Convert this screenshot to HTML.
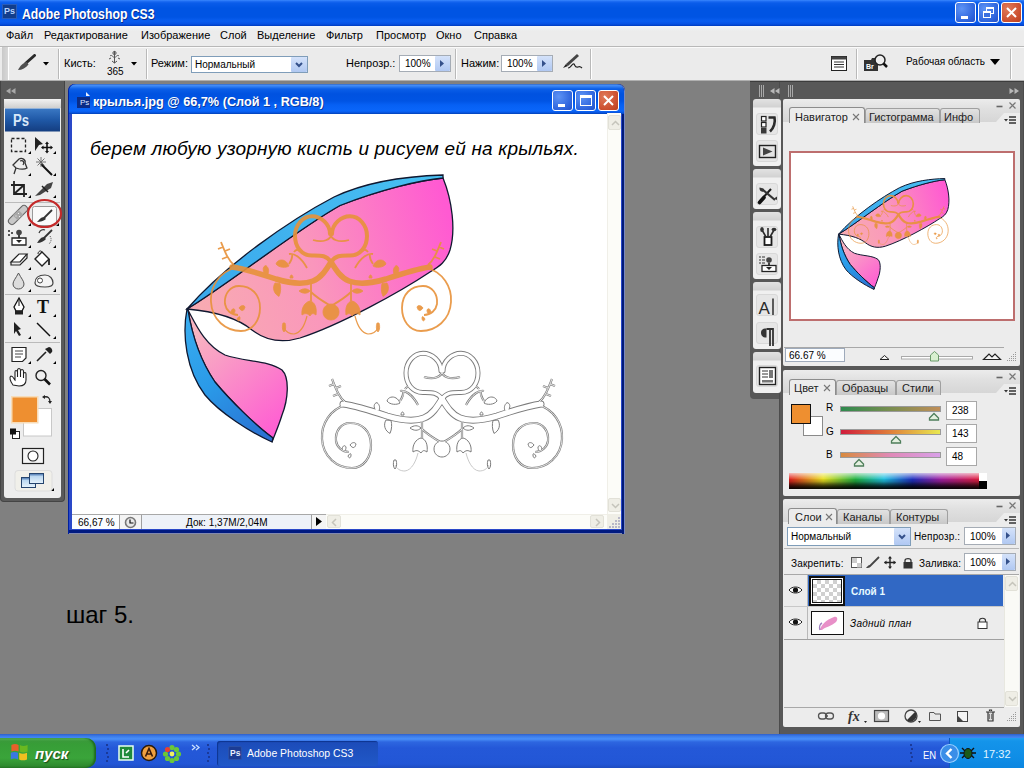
<!DOCTYPE html>
<html><head><meta charset="utf-8">
<style>
*{margin:0;padding:0;box-sizing:border-box}
html,body{width:1024px;height:768px;overflow:hidden;background:#808080;font-family:"Liberation Sans",sans-serif;position:relative}
.a{position:absolute}
#title{left:0;top:0;width:1024px;height:26px;background:linear-gradient(#3d8bff 0,#2270f5 1px,#0a5cea 3px,#0054e3 8px,#0054e3 17px,#0a5ef0 21px,#0652e4 24px,#003cbf 26px)}
#menu{left:0;top:26px;width:1024px;height:21px;background:linear-gradient(#f4f8fc,#ececec 5px);border-bottom:1px solid #b8b8b8}
#opts{left:0;top:47px;width:1024px;height:34px;background:#ebebeb;border-top:1px solid #fafafa;border-bottom:1px solid #b0b0b0}
#tbx{left:0;top:81px;width:65px;height:421px;background:#5a5a5a;border:1px solid #444;border-top:none;border-radius:0 0 4px 4px}
#tbxin{left:4px;top:99px;width:57px;height:399px;background:#ededed;border-radius:3px}
#doc{left:68px;top:84px;width:557px;height:450px;background:#2a48c8;border-radius:7px 7px 0 0;box-shadow:inset 1px 0 0 #0020a0,inset -1px 0 0 #7888c0,inset -3px 0 0 #00197a,inset 0 -1px 0 #8088b0,inset 0 -4px 0 #001a80,inset 0 1px 0 #0030b0}
#docc{left:72px;top:114px;width:549px;height:415px;background:#fff}
#dock1{left:750px;top:81px;width:274px;height:318px;background:#585858;border-radius:0 0 4px 4px}
#dock2{left:779px;top:81px;width:245px;height:653px;background:#585858;box-shadow:inset 1px 0 0 #4c4c4c,inset -1px 0 0 #4c4c4c}
#task{left:0;top:734px;width:1024px;height:34px;background:linear-gradient(#2f5fc8 0,#3a7ae8 2px,#4a90f8 5px,#2d66e0 8px,#2458d8 14px,#2256d6 30px,#1e4cc0 34px)}

.t{position:absolute;white-space:nowrap;line-height:1;color:#000}
.xb{position:absolute;top:2px;width:21px;height:21px;border:1px solid #fff;border-radius:3px;background:radial-gradient(circle at 30% 30%,#5d93f5,#2d63dc 70%,#2550c8)}
.xb.cl{background:radial-gradient(circle at 30% 30%,#e07a5a,#cc5030 65%,#b84020)}
.sep{position:absolute;width:2px;border-left:1px solid #b9b9b9;border-right:1px solid #fff}
.ddbox{position:absolute;background:#fff;border:1px solid #7f9db9}
.ddbtn{position:absolute;background:linear-gradient(#d4e2fa,#b0c8f2);border-radius:1px}

.ig{left:753px;width:28px;border-radius:3px;background:linear-gradient(#e2e2e2 0,#d2d2d2 8px,#f0f0f0 9px,#f0f0f0)}
.ib{left:756px;width:22px;height:22px;border-radius:3px;background:#e6e6e6;border:1px solid #d8d8d8}
.pn{background:linear-gradient(#ececec 0,#e0e0e0 10px,#d6d6d6 23px,#ececec 23px);border-radius:2px}

.tab{height:15px;border:1px solid #a0a0a0;border-bottom:none;border-radius:3px 3px 0 0;background:linear-gradient(#e2e2e2,#c8c8c8)}
.tab.act{height:16px;background:#ececec;border-color:#8c8c8c}
.vb{left:946px;width:31px;height:19px;background:#fff;border:1px solid #a8a8a8}

.os{fill:none;stroke:var(--sc);stroke-width:var(--sw);stroke-linecap:round}
.ob{fill:none;stroke:var(--sc);stroke-width:var(--bw);stroke-linecap:round}
.ot{fill:none;stroke:var(--tc);stroke-width:var(--tw)}
.of{fill:var(--fc);stroke:var(--tc);stroke-width:var(--fw)}
.oh{fill:none;stroke:var(--hc);stroke-width:var(--hw)}
.orange{--hc:#e8923a;--hw:1.2px;--sc:#e8923a;--sw:4px;--bw:5.5px;--tc:#e8923a;--tw:1.8px;--fc:#e8923a;--fw:0.8px}
.gray1{--hc:#bbb;--hw:0.8px;--sc:#7c7c7c;--sw:5px;--bw:7px;--tc:#7c7c7c;--tw:2.2px;--fc:#fff;--fw:1px}
.gray2{--hc:transparent;--hw:0;--sc:#fff;--sw:3.2px;--bw:5.2px;--tc:#fff;--tw:0.8px;--fc:transparent;--fw:0}
</style></head><body>
<div id="title" class="a"></div>
<div id="menu" class="a"></div>
<div id="opts" class="a"></div>

<!-- title bar contents -->
<div class="a" style="left:2px;top:4px;width:15px;height:15px;background:#123e8c;border:1px solid #2a5cb8"></div>
<div class="t" style="left:4px;top:7px;font-size:9px;color:#b6d3ff;font-weight:bold">Ps</div>
<div class="t" style="left:22px;top:7px;font-size:14px;font-weight:bold;color:#fff;transform-origin:0 0;transform:scaleX(0.874);text-shadow:1px 1px 0 #0a2a8a">Adobe Photoshop CS3</div>
<div class="xb" style="left:955px"><div class="a" style="left:5px;top:13px;width:7px;height:3px;background:#fff"></div></div>
<div class="xb" style="left:978px"><div class="a" style="left:7px;top:4px;width:8px;height:7px;border:1px solid #fff;border-top-width:2px"></div><div class="a" style="left:4px;top:8px;width:8px;height:7px;border:1px solid #fff;border-top-width:2px;background:#3a6fe0"></div></div>
<div class="xb cl" style="left:1001px"><svg class="a" style="left:3px;top:3px" width="13" height="13"><path d="M2 2L11 11M11 2L2 11" stroke="#fff" stroke-width="2"/></svg></div>
<!-- menu -->
<div class="t" style="left:6px;top:30px;font-size:11px">Файл</div>
<div class="t" style="left:44px;top:30px;font-size:11px">Редактирование</div>
<div class="t" style="left:141px;top:30px;font-size:11px">Изображение</div>
<div class="t" style="left:220px;top:30px;font-size:11px">Слой</div>
<div class="t" style="left:257px;top:30px;font-size:11px">Выделение</div>
<div class="t" style="left:326px;top:30px;font-size:11px">Фильтр</div>
<div class="t" style="left:376px;top:30px;font-size:11px">Просмотр</div>
<div class="t" style="left:436px;top:30px;font-size:11px">Окно</div>
<div class="t" style="left:474px;top:30px;font-size:11px">Справка</div>
<!-- options bar -->
<div class="a" style="left:2px;top:47px;width:6px;height:33px;background:linear-gradient(90deg,#c9c9c9,#d8d8d8)"></div>
<div class="a" style="left:8px;top:47px;width:1px;height:33px;background:#fff"></div>
<svg class="a" style="left:17px;top:54px" width="20" height="17"><path d="M17.5 1.5L9 9" stroke="#2a2a2a" stroke-width="3" stroke-linecap="round"/><path d="M10 8C6 8.5 3 12 1 16C5 16 9 14 11.5 10.5Z" fill="#505050"/></svg>
<svg class="a" style="left:43px;top:62px" width="6" height="4"><path d="M0 0H6L3 3.5Z" fill="#000"/></svg>
<div class="sep" style="left:58px;top:49px;height:30px"></div>
<div class="t" style="left:64px;top:58px;font-size:11px">Кисть:</div>
<svg class="a" style="left:107px;top:50px" width="15" height="15"><path d="M7.5 1V13M3 6C5 4 6 8 7.5 7C9 8 10 4 12 6M2 9L4 8M13 9L11 8M5 11L7.5 13L10 11" stroke="#555" stroke-width="1" fill="none"/><circle cx="7.5" cy="3" r="1.6" fill="none" stroke="#555"/></svg>
<div class="t" style="left:107px;top:67px;font-size:10px">365</div>
<svg class="a" style="left:131px;top:62px" width="6" height="4"><path d="M0 0H6L3 3.5Z" fill="#000"/></svg>
<div class="sep" style="left:146px;top:49px;height:30px"></div>
<div class="t" style="left:151px;top:58px;font-size:11px">Режим:</div>
<div class="ddbox" style="left:191px;top:56px;width:117px;height:17px"></div>
<div class="t" style="left:195px;top:60px;font-size:10px">Нормальный</div>
<div class="ddbtn" style="left:291px;top:57px;width:16px;height:15px"><svg class="a" style="left:4px;top:5px" width="8" height="6"><path d="M1 1L4 4L7 1" stroke="#34508a" stroke-width="2" fill="none"/></svg></div>
<div class="t" style="left:346px;top:58px;font-size:11px">Непрозр.:</div>
<div class="ddbox" style="left:399px;top:55px;width:52px;height:17px;border-color:#a5acb5"></div>
<div class="t" style="left:405px;top:59px;font-size:10px">100%</div>
<div class="ddbtn" style="left:435px;top:56px;width:15px;height:15px"><svg class="a" style="left:5px;top:4px" width="5" height="7"><path d="M0 0L4 3.5L0 7Z" fill="#34508a"/></svg></div>
<div class="sep" style="left:455px;top:49px;height:30px"></div>
<div class="t" style="left:461px;top:58px;font-size:11px">Нажим:</div>
<div class="ddbox" style="left:501px;top:55px;width:52px;height:17px;border-color:#a5acb5"></div>
<div class="t" style="left:507px;top:59px;font-size:10px">100%</div>
<div class="ddbtn" style="left:537px;top:56px;width:15px;height:15px"><svg class="a" style="left:5px;top:4px" width="5" height="7"><path d="M0 0L4 3.5L0 7Z" fill="#34508a"/></svg></div>
<svg class="a" style="left:561px;top:53px" width="22" height="18"><path d="M16 1L18 3L7 13L5 11Z" fill="#444"/><path d="M5 11L2 15L7 13" fill="#222"/><path d="M7 15C10 15 11 10 13 11C14 12 14 15 17 14C19 13 20 14 21 15" stroke="#222" stroke-width="1.2" fill="none"/></svg>
<div class="sep" style="left:590px;top:49px;height:30px"></div>
<svg class="a" style="left:831px;top:56px" width="16" height="15"><rect x="0.5" y="0.5" width="15" height="14" fill="#fff" stroke="#222"/><rect x="0.5" y="0.5" width="15" height="3" fill="#444"/><path d="M3 6H13M3 8.5H13M3 11H13" stroke="#333"/></svg>
<div class="sep" style="left:856px;top:49px;height:30px"></div>
<svg class="a" style="left:863px;top:53px" width="25" height="19"><path d="M1 7H8L9 5H15V18H1Z" fill="#333"/><text x="3" y="16" font-size="7" fill="#fff" font-family="Liberation Sans" font-weight="bold">Br</text><circle cx="17" cy="7" r="5" fill="#eee" stroke="#222" stroke-width="1.5"/><path d="M20.5 10.5L24 14" stroke="#111" stroke-width="2.5"/></svg>
<div class="t" style="left:906px;top:57px;font-size:10px">Рабочая область</div>
<svg class="a" style="left:990px;top:59px" width="10" height="6"><path d="M0 0H10L5 6Z" fill="#000"/></svg>
<div class="sep" style="left:1010px;top:49px;height:30px"></div>
<div id="tbx" class="a"></div>
<div id="tbxin" class="a"></div>

<svg class="a" style="left:0;top:0" width="66" height="505" viewBox="0 0 66 505">
<defs>
<linearGradient id="psg" x1="0" y1="0" x2="0" y2="1"><stop offset="0" stop-color="#3a78c4"/><stop offset="0.5" stop-color="#1f58a6"/><stop offset="1" stop-color="#143d80"/></linearGradient>
<linearGradient id="tbh" x1="0" y1="0" x2="0" y2="1"><stop offset="0" stop-color="#f2f2f2"/><stop offset="1" stop-color="#cfcfcf"/></linearGradient>
<linearGradient id="scr" x1="0" y1="0" x2="0" y2="1"><stop offset="0" stop-color="#3c6aa8"/><stop offset="0.3" stop-color="#bcd8f0"/><stop offset="1" stop-color="#e8f4fc"/></linearGradient>
</defs>
<path d="M6 91L10.5 88V94Z M11 91L15.5 88V94Z" fill="#a8a8a8"/>
<rect x="4" y="99" width="57" height="9" fill="url(#tbh)"/>
<rect x="5" y="108.5" width="55" height="23" fill="url(#psg)"/>
<text x="13" y="126" font-family="Liberation Sans" font-size="16" font-weight="bold" fill="#d8e8f8" transform="translate(13 0) scale(0.82 1) translate(-13 0)">Ps</text>
<g fill="#000">
<path d="M28 154h3v-3z M53 154h3v-3z" />
<path d="M28 176h3v-3z M53 176h3v-3z M28 198h3v-3z M53 198h3v-3z"/>
<path d="M28 226h3v-3z M56 226h3v-3z M28 248h3v-3z M53 248h3v-3z M28 270h3v-3z M53 270h3v-3z M28 292h3v-3z M53 292h3v-3z"/>
<path d="M28 317h3v-3z M53 317h3v-3z M28 339h3v-3z M53 339h3v-3z M28 364h3v-3z M53 364h3v-3z M51 491h3v-3z"/>
</g>
<!-- marquee -->
<rect x="11.5" y="138.5" width="14" height="13" fill="none" stroke="#222" stroke-width="1.3" stroke-dasharray="3 2"/>
<!-- move -->
<path d="M35 137L43 144L39 145L35 151Z" fill="#222"/>
<path d="M47 143V152M42.5 147.5H51.5" stroke="#111" stroke-width="1.6"/><path d="M47 141.5L45 144H49Z M47 153.5L45 151H49Z M41 147.5L43.5 145.5V149.5Z M53 147.5L50.5 145.5V149.5Z" fill="#111"/>
<!-- lasso -->
<path d="M13 165L19 159C22 157 26 160 25 163L27 168C24 170 19 169 16 168Z" fill="none" stroke="#333" stroke-width="1.3"/><path d="M16 168L14 174M20 161C23 160 25 162 23 165" stroke="#333" stroke-width="1.3" fill="none"/>
<!-- wand -->
<path d="M41 164L52 175" stroke="#111" stroke-width="2"/><path d="M36 162H46M41 157V167M37.5 158.5L44.5 165.5M44.5 158.5L37.5 165.5" stroke="#666" stroke-width="0.9"/>
<!-- crop -->
<path d="M14 181V194H27M11 185H24V197M14 194L24 185" stroke="#222" stroke-width="1.8" fill="none"/>
<!-- slice -->
<path d="M35 196L47 184L53 182L51 188L40 195Z" fill="#444"/><path d="M42 186L48 192" stroke="#222" stroke-width="1.5"/>
<line x1="5" y1="202.5" x2="60" y2="202.5" stroke="#bbb"/>
<!-- healing -->
<rect x="6" y="211.5" width="24" height="7" rx="3.5" transform="rotate(-45 18 215)" fill="#c8c8c8" stroke="#666" stroke-width="1.1"/><rect x="14" y="211.5" width="8" height="7" transform="rotate(-45 18 215)" fill="#a8a8a8"/><path d="M15.5 215.5h1v1h-1zM18 213h1v1h-1zM19 216h1v1h-1z" fill="#eee"/>
<!-- brush selected -->
<rect x="32.5" y="206.5" width="24" height="19" rx="2" fill="#fafafa" stroke="#9a9a9a"/>
<path d="M52 210L44 218" stroke="#333" stroke-width="1.8"/><path d="M44 217C41 217 39 220 37 222C40 222 44 221 46 219Z" fill="#333"/>
<ellipse cx="44.5" cy="213.5" rx="16.5" ry="13.5" fill="none" stroke="#c42a2a" stroke-width="2.2"/>
<!-- stamp -->
<circle cx="19" cy="232.5" r="2.8" fill="#444"/><path d="M19 235V238" stroke="#444" stroke-width="2"/><path d="M12 238H26V245H12Z" fill="#fff" stroke="#222" stroke-width="1.3"/><path d="M16 240H22L19 243Z" fill="#222"/><path d="M8 230h2v2h-2zM11 232h2v2h-2zM8 234h2v2h-2z" fill="#555"/>
<!-- history brush -->
<path d="M52 230L44 238" stroke="#333" stroke-width="1.8"/><path d="M44 237C41 237 39 240 37 243C41 243 44 241 46 239Z" fill="#333"/><path d="M39 233C40 230 43 229 45 230" stroke="#333" stroke-width="1.2" fill="none"/><path d="M50 236C52 239 51 242 49 244" stroke="#555" stroke-dasharray="1 1" fill="none"/>
<!-- eraser -->
<path d="M11 262L19 254H27L20 262Z" fill="#fff" stroke="#222" stroke-width="1.2"/><path d="M11 262V265H20L27 258V254" fill="none" stroke="#222" stroke-width="1.2"/>
<!-- bucket -->
<path d="M35 259L42 252L49 259L42 266Z" fill="#fff" stroke="#222" stroke-width="1.4"/><path d="M49 259V265" stroke="#222" stroke-width="1.8"/><path d="M38 254C38 251 41 250 42 252" stroke="#222" fill="none"/>
<!-- blur -->
<path d="M18.5 273C16 278 13 281 13 284C13 287 15.5 289 18.5 289C21.5 289 24 287 24 284C24 281 21 278 18.5 273Z" fill="#ddd" stroke="#555" stroke-width="1"/>
<!-- dodge -->
<path d="M35 283C35 277 40 275 45 275C50 275 53 279 53 283C53 286 50 287 45 287C40 287 35 286 35 283Z" fill="#f4f4f4" stroke="#444" stroke-width="1.2"/><circle cx="40" cy="280.5" r="2.5" fill="#fff" stroke="#444"/>
<line x1="5" y1="294.5" x2="60" y2="294.5" stroke="#bbb"/>
<!-- pen -->
<path d="M19 298L14 307L16 311H22L24 307Z" fill="#fff" stroke="#111" stroke-width="1.3"/><path d="M19 300V306" stroke="#111"/><rect x="15" y="311" width="8" height="3.5" fill="#222"/>
<!-- type -->
<text x="37" y="313" font-family="Liberation Serif" font-size="18" font-weight="bold" fill="#111">T</text>
<!-- path selection -->
<path d="M14 322L21 329L18 330L21 335L19 336L16 331L14 334Z" fill="#222"/>
<!-- line -->
<path d="M37 323L50 336" stroke="#111" stroke-width="1.4"/>
<line x1="5" y1="342.5" x2="60" y2="342.5" stroke="#bbb"/>
<!-- notes -->
<path d="M12 347.5H26V358L22.5 361.5H12Z" fill="#fff" stroke="#222" stroke-width="1.2"/><path d="M15 351H23M15 354H23M15 357H21" stroke="#444"/>
<!-- eyedropper -->
<path d="M37 361L46 352" stroke="#222" stroke-width="1.6"/><path d="M45 349L50 354L52 352C53 350 51 347 49 347Z" fill="#222"/>
<!-- hand -->
<path d="M13 385C10 381 9 377 11 376C13 376 14 379 15 380V372C15 370 17 370 17.5 372V377V370C18 368 20 368 20.5 370V377V371C21 369 23 369 23.5 371V378V374C24 372 26 372 26 374V380C26 384 23 386 19 386Z" fill="#fff" stroke="#222" stroke-width="1.1"/>
<!-- zoom -->
<circle cx="41" cy="375.5" r="5" fill="#eee" stroke="#222" stroke-width="1.4"/><path d="M44.5 379L50 384.5" stroke="#111" stroke-width="2.6"/>
<!-- colors -->
<rect x="23.5" y="408.5" width="28" height="27.5" fill="#fff" stroke="#c8c8c8"/>
<rect x="11" y="396" width="27.5" height="27.5" fill="#f7dcb8"/>
<rect x="12.5" y="397.5" width="24.5" height="24.5" fill="#ee8f30"/>
<path d="M44 397C48 396 50 398 50 402" stroke="#222" stroke-width="1.3" fill="none"/><path d="M42 397L45 395V399Z M50 404L48 401H52Z" fill="#222"/>
<rect x="12.5" y="431.5" width="7" height="7" fill="#fff" stroke="#222"/>
<rect x="10" y="428.5" width="6" height="6" fill="#111"/>
<!-- quick mask -->
<rect x="22.5" y="448.5" width="21" height="15" fill="#f5f5f5" stroke="#222" stroke-width="1.2"/><circle cx="33" cy="456" r="5" fill="#fff" stroke="#222" stroke-width="1.1"/>
<!-- screen mode -->
<rect x="15" y="470.5" width="37" height="20.5" rx="3" fill="#f1f0ea" stroke="#ddd"/>
<rect x="21.5" y="477.5" width="14" height="10" fill="url(#scr)" stroke="#26456e"/>
<rect x="29.5" y="473.5" width="14" height="10" fill="url(#scr)" stroke="#26456e"/>
</svg>
<div id="doc" class="a"></div>
<div class="a" style="left:69px;top:84px;width:555px;height:30px;border-radius:7px 7px 0 0;background:linear-gradient(#2a5ab0 0,#4a90f8 1px,#3a86f4 2px,#0a5ee8 5px,#0052e0 10px,#0054e4 17px,#0660f4 21px,#0a66fa 27px,#0850d8 29px,#0040b0 30px)"></div>
<div class="a" style="left:77px;top:97px;width:13px;height:11px;background:#0b2c86"></div>
<svg class="a" style="left:85px;top:91px" width="6" height="6"><path d="M1 1L5 5H1Z" fill="#e8f0ff"/></svg>
<div class="t" style="left:80px;top:99px;font-size:8px;color:#dfe8ff">Ps</div>
<div class="t" style="left:93px;top:96px;font-size:12.7px;font-weight:bold;color:#fff;text-shadow:1px 1px 0 #0a3aa0">крылья.jpg @ 66,7% (Слой 1 , RGB/8)</div>
<div class="xb" style="left:552px;top:90px"><div class="a" style="left:5px;top:13px;width:7px;height:3px;background:#fff"></div></div>
<div class="xb" style="left:575px;top:90px"><div class="a" style="left:4px;top:4px;width:12px;height:11px;border:1px solid #fff;border-top-width:3px"></div></div>
<div class="xb cl" style="left:598px;top:90px"><svg class="a" style="left:3px;top:3px" width="13" height="13"><path d="M2 2L11 11M11 2L2 11" stroke="#fff" stroke-width="2"/></svg></div>
<div id="docc" class="a"></div>
<svg class="a" style="left:72px;top:113px" width="535" height="401" viewBox="72 113 535 401">
<defs>
<linearGradient id="pk1" gradientUnits="userSpaceOnUse" x1="200" y1="300" x2="450" y2="220"><stop offset="0" stop-color="#f8aab2"/><stop offset="0.45" stop-color="#fa96bc"/><stop offset="1" stop-color="#ff5ad2"/></linearGradient>
<linearGradient id="pk2" gradientUnits="userSpaceOnUse" x1="200" y1="330" x2="290" y2="430"><stop offset="0" stop-color="#f7b4c0"/><stop offset="1" stop-color="#ff58d4"/></linearGradient>
<linearGradient id="bl1" gradientUnits="userSpaceOnUse" x1="190" y1="300" x2="440" y2="180"><stop offset="0" stop-color="#3aa8ec"/><stop offset="1" stop-color="#48c0f2"/></linearGradient>
<linearGradient id="bl2" gradientUnits="userSpaceOnUse" x1="185" y1="310" x2="270" y2="440"><stop offset="0" stop-color="#3aaef0"/><stop offset="0.5" stop-color="#2a9ae8"/><stop offset="1" stop-color="#2a6ed0"/></linearGradient>
<g id="orn">
<path class="ob" d="M-99 5C-85 7 -70 12 -55 17C-42 21 -28 23 -18 19C-10 16 -5 8 0 0"/>
<path class="ob" d="M99 5C85 7 70 12 55 17C42 21 28 23 18 19C10 16 5 8 0 0"/>
<path class="os" d="M0 0C5 -7 10 -6.5 19 -6.5C30 -6.5 36 -16 36 -26C36 -37 28 -45.7 19 -45.7C10 -45.7 1 -38 1 -28"/><path class="ot" d="M1 -29C0 -22 -8 -19 -18 -22"/>
<path class="os" d="M0 0C-5 -7 -10 -6.5 -19 -6.5C-30 -6.5 -36 -16 -36 -26C-36 -37 -28 -45.7 -19 -45.7C-10 -45.7 -1 -38 -1 -28"/><path class="ot" d="M-1 -29C0 -22 8 -19 18 -22"/>
<path class="ot" d="M-95 5.5C-112 10 -121 25 -120 40C-119 58 -105 69 -90 69C-78 69 -71 58 -71 46C-71 32 -80 24 -92 24C-101 24 -107 32 -106 42C-105 48 -100 53 -93 53"/>
<path class="ot" d="M95 5.5C112 10 121 25 120 40C119 58 105 69 90 69C78 69 71 58 71 46C71 32 80 24 92 24C101 24 107 32 106 42C105 48 100 53 93 53"/>
<path class="ot" d="M-97 3C-103 -2 -106 -10 -110 -20M-104 -5L-109 -3M-106 -11L-101 -13M-108 -15L-113 -13M97 3C103 -2 106 -10 110 -20M104 -5L109 -3M106 -11L101 -13M108 -15L113 -13"/>
<path class="ot" d="M-20 21V39M20 21V39M-20 30C-14 36 -7 40 0 44C7 40 14 36 20 30M-37 -10C-35 -13 -32 -13 -31 -10M37 -10C35 -13 32 -13 31 -10"/>
<path class="of" d="M-29 53C-30 46 -26 40 -21 39C-16 40 -14 46 -15 53C-18 51 -19 51 -21 54C-24 51 -26 51 -29 53Z"/>
<path class="of" d="M29 53C30 46 26 40 21 39C16 40 14 46 15 53C18 51 19 51 21 54C24 51 26 51 29 53Z"/>
<path class="of" d="M-8 50C-8 45 -4 42 0 42C4 42 8 45 8 50C8 55 4 58 0 58C-4 58 -8 55 -8 50Z"/>
<path class="of" d="M-55 2C-54 -2 -49 -3 -46 -1C-44 0 -43 2 -42 4C-45 6 -52 6 -55 2Z"/><path class="ot" d="M-42 -8C-37 -9 -30 -5 -24 6M-42 2C-40 -1 -38 -4 -39 -8"/>
<path class="of" d="M55 2C54 -2 49 -3 46 -1C44 0 43 2 42 4C45 6 52 6 55 2Z"/><path class="ot" d="M42 -8C37 -9 30 -5 24 6M42 2C40 -1 38 -4 39 -8"/>
<path class="of" d="M-66 12C-69 8 -68 4 -65 3.6C-62 6 -62 9 -63 12Z M66 12C69 8 68 4 65 3.6C62 6 62 9 63 12Z M-56 21C-59 26 -57 32 -52 34.4C-50 30 -50 25 -51 21.5Z M56 21C59 26 57 32 52 34.4C50 30 50 25 51 21.5Z M-41 16C-41 12 -38 12 -38 16Z M41 16C41 12 38 12 38 16Z"/>
<path class="of" d="M-32 29C-28 26 -24 26 -21 29C-24 32 -28 32 -32 29Z M32 29C28 26 24 26 21 29C24 32 28 32 32 29Z"/>
<path class="of" d="M-100 50C-99 46 -97 46 -96 48C-96 52 -98 53 -100 50Z M-92 46C-90 43 -87 43 -86 45C-87 49 -89 50 -92 46Z M-94 57C-92 54 -91 54 -91 56C-91 59 -93 60 -94 57Z M100 50C99 46 97 46 96 48C96 52 98 53 100 50Z M92 46C90 43 87 43 86 45C87 49 89 50 92 46Z M94 57C92 54 91 54 91 56C91 59 93 60 94 57Z"/>
<path class="of" d="M-48 61C-49 64 -49 68 -47 70C-45 68 -45 64 -46 61Z M48 61C49 64 49 68 47 70C45 68 45 64 46 61Z"/>
<path class="oh" d="M-24 54C-26 62 -30 71 -37 72C-42 72 -45 70 -47 66M24 54C26 62 30 71 37 72C42 72 45 70 47 66"/>
</g>
<g id="wing">
<path d="M188 310C196 325 205 345 225 355C245 362 268 360 282 370C290 378 288 400 282 415C278 428 274 436 272 442L273 438C255 425 230 400 215 382C200 360 192 335 188 310Z" fill="url(#pk2)" style="stroke:#101830;stroke-width:var(--ow,1.3px)"/>
<path d="M187 309C182 335 186 370 205 395C220 413 250 432 272 442L273 438C255 425 230 400 215 382C200 360 192 335 188 310Z" fill="url(#bl2)" style="stroke:#101830;stroke-width:var(--ow,1.3px)"/>
<path d="M187 309C226 286 296 230 340 205.5C380 190 420 180 443 178C452 200 456 230 450 250C446 262 440 266 430 272C400 292 340 325 300 338C280 344 265 340 252 330C240 320 220 312 187 309Z" fill="url(#pk1)" style="stroke:#101830;stroke-width:var(--ow,1.3px)"/>
<path d="M187 309C225 265 290 220 334 197C370 180 410 176 443 175L443 178C420 180 380 190 340 205.5C296 230 226 286 187 309Z" fill="url(#bl1)" style="stroke:#101830;stroke-width:var(--ow,1.3px)"/>
<g transform="translate(331 262)" class="orange" opacity="0.9"><use href="#orn"/></g>
</g>
</defs>
<use href="#wing"/>
<g transform="translate(442 399)" class="gray1"><use href="#orn"/></g>
<g transform="translate(442 399)" class="gray2"><use href="#orn"/></g>
</svg>
<div class="t" style="left:90px;top:139px;font-size:19px;font-style:italic;letter-spacing:0.18px">берем любую узорную кисть и рисуем ей на крыльях.</div>
<!-- vertical scrollbar -->
<div class="a" style="left:607px;top:113px;width:14px;height:401px;background:#fcfcf8;border-left:1px solid #f0efe8"></div>
<div class="a" style="left:608px;top:115px;width:13px;height:15px;background:#efeee6;border:1px solid #e2e1d8;border-radius:2px"><svg class="a" style="left:2px;top:4px" width="9" height="6"><path d="M1 5L4.5 1.5L8 5" stroke="#c5c4bb" stroke-width="1.5" fill="none"/></svg></div>
<div class="a" style="left:608px;top:498px;width:13px;height:14px;background:#efeee6;border:1px solid #e2e1d8;border-radius:2px"><svg class="a" style="left:2px;top:4px" width="9" height="6"><path d="M1 1L4.5 4.5L8 1" stroke="#c5c4bb" stroke-width="1.5" fill="none"/></svg></div>
<!-- status bar -->
<div class="a" style="left:72px;top:514px;width:549px;height:15px;background:#f4f4f4;border-top:1px solid #a8a8a8"></div>
<div class="a" style="left:72px;top:515px;width:47px;height:14px;background:#fbfdff"></div>
<div class="a" style="left:119px;top:515px;width:1px;height:14px;background:#a0a0a0"></div>
<div class="a" style="left:141px;top:515px;width:1px;height:14px;background:#a0a0a0"></div>
<div class="a" style="left:142px;top:515px;width:169px;height:14px;background:#eef2f8"></div>
<div class="a" style="left:311px;top:515px;width:1px;height:14px;background:#a0a0a0"></div>
<svg class="a" style="left:124px;top:516px" width="13" height="13"><circle cx="6.5" cy="6.5" r="5" fill="#e8e8e8" stroke="#777" stroke-width="1.6"/><path d="M6 3.5V7H9.5" stroke="#111" stroke-width="1.2" fill="none"/></svg>
<div class="t" style="left:78px;top:518px;font-size:10px">66,67 %</div>
<div class="t" style="left:186px;top:518px;font-size:10px;letter-spacing:0.05px">Док: 1,37M/2,04M</div>
<svg class="a" style="left:316px;top:517px" width="6" height="9"><path d="M0 0L6 4.5L0 9Z" fill="#000"/></svg>
<div class="a" style="left:326px;top:514px;width:281px;height:15px;background:#fcfcf8;border-top:1px solid #f0efe8"></div>
<div class="a" style="left:327px;top:515px;width:14px;height:13px;background:#efeee6;border:1px solid #e2e1d8;border-radius:2px"><svg class="a" style="left:3px;top:2px" width="6" height="9"><path d="M5 1L1.5 4.5L5 8" stroke="#c5c4bb" stroke-width="1.5" fill="none"/></svg></div>
<div class="a" style="left:590px;top:515px;width:14px;height:13px;background:#efeee6;border:1px solid #e2e1d8;border-radius:2px"><svg class="a" style="left:4px;top:2px" width="6" height="9"><path d="M1 1L4.5 4.5L1 8" stroke="#c5c4bb" stroke-width="1.5" fill="none"/></svg></div>
<div class="a" style="left:607px;top:514px;width:14px;height:15px;background:#efeee6"></div>
<svg class="a" style="left:609px;top:516px" width="12" height="12"><g fill="#b8b8c8"><rect x="9" y="1" width="2" height="2"/><rect x="6" y="4" width="2" height="2"/><rect x="9" y="4" width="2" height="2"/><rect x="3" y="7" width="2" height="2"/><rect x="6" y="7" width="2" height="2"/><rect x="9" y="7" width="2" height="2"/><rect x="0" y="10" width="2" height="2"/><rect x="3" y="10" width="2" height="2"/><rect x="6" y="10" width="2" height="2"/><rect x="9" y="10" width="2" height="2"/></g></svg>
<div class="t" style="left:66px;top:603px;font-size:24px">шаг 5.</div>

<div id="dock1" class="a"></div>
<div id="dock2" class="a"></div>
<div class="a" style="left:750px;top:81px;width:274px;height:1px;background:#3c3c3c"></div>
<svg class="a" style="left:750px;top:81px" width="274" height="18">
<path d="M9.5 4V16M11.5 4V16M13.5 4V16" stroke="#a8a8a8"/>
<path d="M38.5 4V16M40.5 4V16M42.5 4V16" stroke="#a8a8a8"/>
<path d="M20 10L24.5 7V13Z M25 10L29.5 7V13Z" fill="#b8b8b8"/>
<path d="M264 10L259.5 7V13Z M269 10L264.5 7V13Z" fill="#b8b8b8"/>
</svg>
<!-- icon column groups -->
<div class="ig a" style="top:99px;height:67px"></div>
<div class="ig a" style="top:169px;height:40px"></div>
<div class="ig a" style="top:212px;height:67px"></div>
<div class="ig a" style="top:282px;height:67px"></div>
<div class="ig a" style="top:352px;height:41px"></div>
<div class="ib a" style="top:113px"></div><div class="ib a" style="top:140px"></div>
<div class="ib a" style="top:183px"></div>
<div class="ib a" style="top:226px"></div><div class="ib a" style="top:253px"></div>
<div class="ib a" style="top:294px"></div><div class="ib a" style="top:322px"></div>
<div class="ib a" style="top:365px"></div>
<svg class="a" style="left:750px;top:99px" width="32" height="300">
<!-- history -->
<rect x="11.5" y="17.5" width="4.5" height="4.5" fill="#fff" stroke="#222" stroke-width="1.2"/><rect x="11.5" y="23.5" width="4.5" height="4.5" fill="#fff" stroke="#222" stroke-width="1.2"/><rect x="11" y="29" width="5.5" height="5.5" fill="#3a3a3a"/>
<path d="M18.5 18.5H24.5C25.5 23 24 29 20 32.5" stroke="#2a2a2a" stroke-width="2.6" fill="none"/>
<!-- actions -->
<rect x="9.5" y="46.5" width="16" height="12" fill="#e4e4e4" stroke="#222" stroke-width="1.4"/><path d="M13 48.5L22.5 52.5L13 56.5Z" fill="#444"/>
<!-- tools -->
<path d="M10 102L21 90" stroke="#1a1a1a" stroke-width="2"/><path d="M9.5 103.5L14 98.5" stroke="#111" stroke-width="3.6" stroke-linecap="round"/>
<path d="M12 90L25 101" stroke="#333" stroke-width="2.2"/><path d="M9.5 88.5C9 91 11 93.5 13.5 92.5L14 90L11.5 89Z" fill="#333"/><path d="M24 99.5L27 97.5V101Z" fill="#333"/>
<!-- brushes -->
<rect x="14.5" y="138" width="7" height="8" fill="#fff" stroke="#1a1a1a" stroke-width="1.8"/><path d="M16 138L12 131M18 138V129M20 138L24 131" stroke="#2a2a2a" stroke-width="1.6"/><ellipse cx="12" cy="130.5" rx="1.8" ry="2.6" fill="#333"/><ellipse cx="24" cy="130.5" rx="2.4" ry="1.8" fill="#333"/>
<!-- clone source -->
<circle cx="19" cy="161" r="2.8" fill="#444"/><path d="M19 163.5V166" stroke="#444" stroke-width="2"/><rect x="12" y="166.5" width="14" height="6" fill="#fff" stroke="#222" stroke-width="1.3"/><path d="M16 168H22L19 171Z" fill="#222"/><path d="M9 158H11M12 158H15M9 161H11M12 161H15M9 164H11M12 164H15" stroke="#333" stroke-width="1.2"/>
<!-- character -->
<text x="8.5" y="215" font-family="Liberation Sans" font-size="17" fill="#2a2a2a">A</text><path d="M23 199.5V216" stroke="#111" stroke-width="1.3"/>
<!-- paragraph -->
<path d="M16.5 230H23V247M20 230V247" stroke="#333" stroke-width="1.8" fill="none"/><path d="M16.5 229.5C12 229.5 11 231.5 11 234C11 236.5 12.5 238.5 16.5 238.5Z" fill="#333"/>
<!-- layer comps -->
<rect x="9.5" y="268.5" width="16" height="17" fill="#fff" stroke="#222" stroke-width="1.4"/><path d="M12 272H18M12 275H18M12 278H18" stroke="#333"/><rect x="19" y="271" width="4" height="8" fill="#777"/><rect x="12" y="281" width="11" height="2.5" fill="#777"/>
</svg>
<!-- panels -->
<div class="pn a" style="left:783px;top:99px;width:237px;height:267px"></div>
<div class="pn a" style="left:783px;top:370px;width:237px;height:126px"></div>
<div class="pn a" style="left:783px;top:499px;width:237px;height:228px"></div>


<!-- ===== Navigator panel ===== -->
<div class="tab act a" style="left:789px;top:107px;width:76px"></div>
<div class="tab a" style="left:865px;top:108px;width:75px"></div>
<div class="tab a" style="left:940px;top:108px;width:40px"></div>
<div class="t" style="left:795px;top:112px;font-size:11px;color:#222">Навигатор</div>
<svg class="a" style="left:852px;top:113px" width="8" height="8"><path d="M1 1L7 7M7 1L1 7" stroke="#777" stroke-width="1.1"/></svg>
<div class="t" style="left:869px;top:112px;font-size:11px;color:#222;letter-spacing:-0.1px">Гистограмма</div>
<div class="t" style="left:944px;top:112px;font-size:11px;color:#222">Инфо</div>
<svg class="a pm" style="left:994px;top:100px" width="26" height="24">
<path d="M2.5 6.5H8.5" stroke="#666" stroke-width="1.6"/><path d="M15.5 2.5L21.5 8.5M21.5 2.5L15.5 8.5" stroke="#777" stroke-width="1.2"/>
<path d="M2 22L10 13H26V24H0Z" fill="#ececec"/>
<path d="M10 19H14L12 21.5Z" fill="#333"/><path d="M15 17H22M15 20H22M15 23H22" stroke="#333" stroke-width="1.3"/>
</svg>
<div class="a" style="left:789px;top:151px;width:226px;height:170px;border:2px solid #bd6e6e;background:#fff"></div>
<svg class="a" style="left:791px;top:153px" width="222" height="166" viewBox="791 153 222 166"><g transform="translate(761 105.9) scale(0.415)" style="--ow:2.4px"><use href="#wing"/></g></svg>
<div class="a" style="left:784px;top:347px;width:220px;height:1px;background:#a8a8a8"></div>
<div class="a" style="left:785px;top:348px;width:60px;height:14px;background:#fbfdff;border:1px solid #9eaabb"></div>
<div class="t" style="left:789px;top:351px;font-size:10px">66.67 %</div>
<svg class="a" style="left:878px;top:350px" width="126" height="14">
<path d="M2 9.5L6.5 5.5L11 9.5Z" fill="#f5f5f5" stroke="#222" stroke-width="1"/>
<rect x="23.5" y="6.5" width="71" height="2.5" fill="#fff" stroke="#aaa" stroke-width="1"/>
<path d="M52.5 11V5L56.5 1.5L60.5 5V11Z" fill="#d8f0d0" stroke="#6a9a6a" stroke-width="1"/>
<path d="M105.5 9.5L111 4L114 7L117 4L122.5 9.5Z" fill="#f5f5f5" stroke="#222" stroke-width="1.2"/>
</svg>
<svg class="a" style="left:1007px;top:352px" width="10" height="10"><g fill="#999"><rect x="8" y="0" width="1" height="1"/><rect x="6" y="2" width="1" height="1"/><rect x="8" y="2" width="1" height="1"/><rect x="4" y="4" width="1" height="1"/><rect x="6" y="4" width="1" height="1"/><rect x="8" y="4" width="1" height="1"/><rect x="2" y="6" width="1" height="1"/><rect x="4" y="6" width="1" height="1"/><rect x="6" y="6" width="1" height="1"/><rect x="8" y="6" width="1" height="1"/><rect x="0" y="8" width="1" height="1"/><rect x="2" y="8" width="1" height="1"/><rect x="4" y="8" width="1" height="1"/><rect x="6" y="8" width="1" height="1"/><rect x="8" y="8" width="1" height="1"/></g></svg>
<!-- ===== Color panel ===== -->
<div class="tab act a" style="left:789px;top:379px;width:47px"></div>
<div class="tab a" style="left:836px;top:380px;width:60px"></div>
<div class="tab a" style="left:896px;top:380px;width:45px"></div>
<div class="t" style="left:794px;top:383px;font-size:11px;color:#222">Цвет</div>
<svg class="a" style="left:823px;top:384px" width="8" height="8"><path d="M1 1L7 7M7 1L1 7" stroke="#777" stroke-width="1.1"/></svg>
<div class="t" style="left:842px;top:383px;font-size:11px;color:#222">Образцы</div>
<div class="t" style="left:902px;top:383px;font-size:11px;color:#222">Стили</div>
<svg class="a pm" style="left:994px;top:371px" width="26" height="24">
<path d="M2.5 6.5H8.5" stroke="#666" stroke-width="1.6"/><path d="M15.5 2.5L21.5 8.5M21.5 2.5L15.5 8.5" stroke="#777" stroke-width="1.2"/>
<path d="M2 22L10 13H26V24H0Z" fill="#ececec"/>
<path d="M10 19H14L12 21.5Z" fill="#333"/><path d="M15 17H22M15 20H22M15 23H22" stroke="#333" stroke-width="1.3"/>
</svg>
<div class="a" style="left:803px;top:416px;width:20px;height:20px;background:#fff;border:1px solid #8a8a8a"></div>
<div class="a" style="left:791px;top:404px;width:20px;height:20px;background:#ee8f30;border:1px solid #111"></div>
<div class="t" style="left:826px;top:403px;font-size:10px">R</div>
<div class="t" style="left:826px;top:427px;font-size:10px">G</div>
<div class="t" style="left:826px;top:450px;font-size:10px">B</div>
<div class="a" style="left:840px;top:406px;width:101px;height:6px;background:linear-gradient(90deg,#2e8a4e,#7a8e50,#c08e58);border:1px solid #9a9a9a"></div>
<div class="a" style="left:840px;top:429px;width:101px;height:6px;background:linear-gradient(90deg,#d01c3c,#e0803a,#e8e850);border:1px solid #9a9a9a"></div>
<div class="a" style="left:840px;top:452px;width:101px;height:6px;background:linear-gradient(90deg,#d88a3e,#e08ab8,#d8a0e8);border:1px solid #9a9a9a"></div>
<svg class="a" style="left:928px;top:412px" width="12" height="9"><path d="M1.5 8V6L6 1.5L10.5 6V8Z" fill="#e4f0e0" stroke="#4e7e5a" stroke-width="1.3"/></svg>
<svg class="a" style="left:890px;top:435px" width="12" height="9"><path d="M1.5 8V6L6 1.5L10.5 6V8Z" fill="#e4f0e0" stroke="#4e7e5a" stroke-width="1.3"/></svg>
<svg class="a" style="left:853px;top:458px" width="12" height="9"><path d="M1.5 8V6L6 1.5L10.5 6V8Z" fill="#e4f0e0" stroke="#4e7e5a" stroke-width="1.3"/></svg>
<div class="a vb" style="top:401px"></div><div class="a vb" style="top:424px"></div><div class="a vb" style="top:447px"></div>
<div class="t" style="left:952px;top:406px;font-size:10px">238</div>
<div class="t" style="left:952px;top:429px;font-size:10px">143</div>
<div class="t" style="left:952px;top:452px;font-size:10px">48</div>
<div class="a" style="left:789px;top:473px;width:190px;height:16px;background:linear-gradient(#ffffff00,#00000000 35%,#000000c0 100%),linear-gradient(90deg,#e02020,#e8e020 18%,#20b040 35%,#20c0e0 50%,#2030c0 65%,#a020a0 80%,#e02040 100%)"></div>
<div class="a" style="left:789px;top:473px;width:190px;height:16px;background:linear-gradient(#ffffffb0,#ffffff00 40%,#00000000 55%,#000000d0)"></div>
<div class="a" style="left:979px;top:473px;width:8px;height:8px;background:#fff"></div>
<div class="a" style="left:979px;top:481px;width:8px;height:8px;background:#000"></div>
<!-- ===== Layers panel ===== -->
<div class="tab act a" style="left:788px;top:508px;width:49px"></div>
<div class="tab a" style="left:837px;top:509px;width:53px"></div>
<div class="tab a" style="left:890px;top:509px;width:58px"></div>
<div class="t" style="left:795px;top:512px;font-size:11px;color:#222">Слои</div>
<svg class="a" style="left:825px;top:513px" width="8" height="8"><path d="M1 1L7 7M7 1L1 7" stroke="#777" stroke-width="1.1"/></svg>
<div class="t" style="left:843px;top:512px;font-size:11px;color:#222">Каналы</div>
<div class="t" style="left:896px;top:512px;font-size:11px;color:#222">Контуры</div>
<svg class="a pm" style="left:994px;top:500px" width="26" height="24">
<path d="M2.5 6.5H8.5" stroke="#666" stroke-width="1.6"/><path d="M15.5 2.5L21.5 8.5M21.5 2.5L15.5 8.5" stroke="#777" stroke-width="1.2"/>
<path d="M2 22L10 13H26V24H0Z" fill="#ececec"/>
<path d="M10 19H14L12 21.5Z" fill="#333"/><path d="M15 17H22M15 20H22M15 23H22" stroke="#333" stroke-width="1.3"/>
</svg>
<div class="ddbox" style="left:787px;top:527px;width:124px;height:19px"></div>
<div class="t" style="left:791px;top:532px;font-size:10px">Нормальный</div>
<div class="ddbtn" style="left:894px;top:528px;width:16px;height:17px"><svg class="a" style="left:4px;top:6px" width="8" height="6"><path d="M1 1L4 4L7 1" stroke="#34508a" stroke-width="2" fill="none"/></svg></div>
<div class="t" style="left:914px;top:532px;font-size:10px;letter-spacing:0.15px">Непрозр.:</div>
<div class="ddbox" style="left:964px;top:527px;width:52px;height:18px;border-color:#a5acb5"></div>
<div class="t" style="left:970px;top:532px;font-size:10px">100%</div>
<div class="ddbtn" style="left:1002px;top:528px;width:13px;height:16px"><svg class="a" style="left:4px;top:4px" width="5" height="7"><path d="M0 0L4 3.5L0 7Z" fill="#34508a"/></svg></div>
<div class="a" style="left:784px;top:548px;width:235px;height:1px;background:#b8b8b8"></div>
<div class="t" style="left:791px;top:559px;font-size:10px;letter-spacing:0.2px">Закрепить:</div>
<svg class="a" style="left:850px;top:556px" width="64" height="13">
<rect x="1.5" y="1.5" width="10" height="10" fill="#fff" stroke="#555"/><rect x="2" y="2" width="5" height="5" fill="#ccc"/><rect x="7" y="7" width="4.5" height="4.5" fill="#ccc"/>
<path d="M29 1L20 10" stroke="#444" stroke-width="1.8"/><path d="M20 9C18 9 17 11 16 12C18 12 20 12 21 10Z" fill="#444"/>
<path d="M40 1V12M34.5 6.5H45.5" stroke="#222" stroke-width="1.4"/><path d="M40 0L38 2.5H42Z M40 13L38 10.5H42Z M34 6.5L36.5 4.5V8.5Z M46 6.5L43.5 4.5V8.5Z" fill="#222"/>
<path d="M55 6V4.5C55 2 61 2 61 4.5V6" stroke="#333" stroke-width="1.3" fill="none"/><rect x="53.5" y="6" width="9" height="6.5" fill="#333"/>
</svg>
<div class="t" style="left:919px;top:559px;font-size:10px;letter-spacing:0.1px">Заливка:</div>
<div class="ddbox" style="left:964px;top:553px;width:52px;height:18px;border-color:#a5acb5"></div>
<div class="t" style="left:970px;top:558px;font-size:10px">100%</div>
<div class="ddbtn" style="left:1002px;top:554px;width:13px;height:16px"><svg class="a" style="left:4px;top:4px" width="5" height="7"><path d="M0 0L4 3.5L0 7Z" fill="#34508a"/></svg></div>
<div class="a" style="left:784px;top:574px;width:235px;height:1px;background:#a8a8a8"></div>
<!-- layers list -->
<div class="a" style="left:784px;top:575px;width:220px;height:132px;background:#ececec"></div>
<div class="a" style="left:844px;top:575px;width:159px;height:32px;background:#3168c4"></div>
<div class="a" style="left:807px;top:575px;width:37px;height:32px;background:#3168c4"></div>
<div class="a" style="left:807px;top:575px;width:1px;height:64px;background:#b8b8b8"></div>
<div class="a" style="left:784px;top:606px;width:220px;height:1px;background:#c8c8c8"></div>
<div class="a" style="left:784px;top:639px;width:220px;height:1px;background:#a0a0a0"></div>
<div class="a" style="left:809px;top:576px;width:36px;height:30px;background:#fff;border:2px solid #111"></div>
<div class="a" style="left:812px;top:579px;width:30px;height:24px;border:1px solid #111;background-color:#fff;background-image:linear-gradient(45deg,#d0d0d0 25%,transparent 25%,transparent 75%,#d0d0d0 75%),linear-gradient(45deg,#d0d0d0 25%,transparent 25%,transparent 75%,#d0d0d0 75%);background-size:8px 8px;background-position:0 0,4px 4px"></div>
<div class="t" style="left:851px;top:587px;font-size:10px;font-weight:bold;color:#e8faff">Слой 1</div>
<div class="a" style="left:811px;top:611px;width:33px;height:24px;background:#fff;border:1px solid #111"></div>
<svg class="a" style="left:812px;top:612px" width="31" height="22"><path d="M8 18C9 13 14 8 22 5C26 4 26 8 24 10C20 14 13 15 10 18Z" fill="#e890c8"/><path d="M8 18C7 15 8 12 10 11" stroke="#a080c0" stroke-width="1.5" fill="none"/></svg>
<div class="t" style="left:850px;top:619px;font-size:10px;font-style:italic;letter-spacing:0.25px">Задний план</div>
<svg class="a" style="left:977px;top:617px" width="11" height="12"><path d="M2.5 5V3.5C2.5 0.5 8.5 0.5 8.5 3.5V5" stroke="#333" stroke-width="1.2" fill="none"/><rect x="1" y="5" width="9" height="6.5" fill="#fff" stroke="#333"/></svg>
<svg class="a" style="left:788px;top:585px" width="15" height="10"><path d="M1 5C4 1 11 1 14 5C11 9 4 9 1 5Z" fill="#fff" stroke="#222"/><circle cx="7.5" cy="5" r="2.6" fill="#111"/></svg>
<svg class="a" style="left:788px;top:617px" width="15" height="10"><path d="M1 5C4 1 11 1 14 5C11 9 4 9 1 5Z" fill="#fff" stroke="#222"/><circle cx="7.5" cy="5" r="2.6" fill="#111"/></svg>
<div class="a" style="left:1004px;top:575px;width:15px;height:132px;background:#fafaf6;border-left:1px solid #e8e8e0"></div>
<div class="a" style="left:1005px;top:576px;width:13px;height:15px;background:#efeee6;border:1px solid #e2e1d8;border-radius:2px"><svg class="a" style="left:2px;top:4px" width="9" height="6"><path d="M1 5L4.5 1.5L8 5" stroke="#c5c4bb" stroke-width="1.5" fill="none"/></svg></div>
<div class="a" style="left:1005px;top:691px;width:13px;height:15px;background:#efeee6;border:1px solid #e2e1d8;border-radius:2px"><svg class="a" style="left:2px;top:4px" width="9" height="6"><path d="M1 1L4.5 4.5L8 1" stroke="#c5c4bb" stroke-width="1.5" fill="none"/></svg></div>
<div class="a" style="left:784px;top:707px;width:220px;height:1px;background:#a8a8a8"></div>
<svg class="a" style="left:815px;top:708px" width="205" height="16">
<path d="M9 8H13" stroke="#555" stroke-width="1.5"/><rect x="3.5" y="5" width="8" height="6" rx="3" fill="#f0f0f0" stroke="#555" stroke-width="1.3"/><rect x="10.5" y="5" width="8" height="6" rx="3" fill="none" stroke="#555" stroke-width="1.3"/>
<text x="33" y="13" font-family="Liberation Serif" font-style="italic" font-weight="bold" font-size="14" fill="#333">fx</text><path d="M49 13H52L50.5 15Z" fill="#222"/>
<rect x="59.5" y="2.5" width="14" height="11" fill="#bbb" stroke="#444" stroke-width="1.2"/><circle cx="66.5" cy="8" r="3.6" fill="#fff"/>
<circle cx="96" cy="8" r="6" fill="#eee" stroke="#444" stroke-width="1.3"/><path d="M100.2 3.8A6 6 0 0 1 91.8 12.2Z" fill="#333"/><path d="M103 13H106L104.5 15Z" fill="#222"/>
<path d="M114.5 4.5H119L120 6H125.5V12.5H114.5Z" fill="#e8e8e8" stroke="#555"/>
<rect x="142.5" y="3.5" width="10" height="10" fill="#f4f4f4" stroke="#444"/><path d="M143 13V8L148 13Z" fill="#444"/>
<path d="M171 4H180M173 4V13H178V4M174.5 3V2H176.5V3" stroke="#333" stroke-width="1.2" fill="#ddd"/><path d="M174.5 6V11M176.5 6V11" stroke="#666" stroke-width="0.8"/>
</svg>
<svg class="a" style="left:1007px;top:712px" width="10" height="10"><g fill="#999"><rect x="8" y="0" width="1" height="1"/><rect x="6" y="2" width="1" height="1"/><rect x="8" y="2" width="1" height="1"/><rect x="4" y="4" width="1" height="1"/><rect x="6" y="4" width="1" height="1"/><rect x="8" y="4" width="1" height="1"/><rect x="2" y="6" width="1" height="1"/><rect x="4" y="6" width="1" height="1"/><rect x="6" y="6" width="1" height="1"/><rect x="8" y="6" width="1" height="1"/><rect x="0" y="8" width="1" height="1"/><rect x="2" y="8" width="1" height="1"/><rect x="4" y="8" width="1" height="1"/><rect x="6" y="8" width="1" height="1"/><rect x="8" y="8" width="1" height="1"/></g></svg>
<div id="task" class="a"></div>
<div class="a" style="left:0;top:738px;width:96px;height:30px;border-radius:0 10px 10px 0;background:linear-gradient(#5cb85c 0,#3a9a3a 3px,#379d37 6px,#3aa43a 20px,#2e8a2e 28px,#287828 30px);box-shadow:inset -2px 0 2px #1e6a1e"></div>
<svg class="a" style="left:9px;top:742px" width="21" height="21" viewBox="0 0 17.5 17.5">
<path d="M2 2.5C4 1.5 6 1.5 8 2.5V8C6 7 4 7 2 8Z" fill="#e8602a"/>
<path d="M9 2.5C11 3.5 13 3.5 15.5 2.5V8C13 9 11 9 9 8Z" fill="#6ab820"/>
<path d="M1.5 9C3.5 8 5.5 8 7.5 9V14.5C5.5 13.5 3.5 13.5 1.5 14.5Z" fill="#3a78e0"/>
<path d="M8.5 9C10.5 10 12.5 10 15 9V14.5C12.5 15.5 10.5 15.5 8.5 14.5Z" fill="#f0c020"/>
</svg>
<div class="t" style="left:35px;top:746px;font-size:15px;font-weight:bold;font-style:italic;color:#fff;text-shadow:1px 1px 1px #1a4a1a">пуск</div>
<svg class="a" style="left:104px;top:742px" width="112" height="24">
<g fill="#1a3a9a"><rect x="2" y="2" width="2" height="2"/><rect x="3" y="6" width="2" height="2"/><rect x="2" y="10" width="2" height="2"/><rect x="3" y="14" width="2" height="2"/><rect x="2" y="18" width="2" height="2"/>
<rect x="103" y="2" width="2" height="2"/><rect x="104" y="6" width="2" height="2"/><rect x="103" y="10" width="2" height="2"/><rect x="104" y="14" width="2" height="2"/><rect x="103" y="18" width="2" height="2"/></g>
<rect x="15" y="4" width="14" height="14" fill="#1f8a3a" stroke="#e8fff0" stroke-width="1.5"/><path d="M19 7V15H25M22 11L25 8" stroke="#fff" stroke-width="1.6" fill="none"/>
<circle cx="45" cy="11" r="7.5" fill="#f0a040" stroke="#2a1a0a" stroke-width="1.5"/><path d="M41.5 14.5L45 6.5L48.5 14.5M42.5 12H47.5" stroke="#3a1a0a" stroke-width="1.6" fill="none"/>
<g fill="#6ac838"><circle cx="68" cy="5.5" r="2.6"/><circle cx="72.5" cy="7.5" r="2.6"/><circle cx="74.5" cy="12" r="2.6"/><circle cx="72.5" cy="16.5" r="2.6"/><circle cx="68" cy="18.5" r="2.6"/><circle cx="63.5" cy="16.5" r="2.6"/><circle cx="61.5" cy="12" r="2.6"/></g><circle cx="63.5" cy="7.5" r="2.6" fill="#e84030"/><circle cx="68" cy="12" r="2.4" fill="#f0f060"/>
<path d="M88 3L91 5.5L88 8M92 3L95 5.5L92 8" stroke="#c8e0ff" stroke-width="1.3" fill="none"/>
</svg>
<div class="a" style="left:217px;top:741px;width:161px;height:25px;border-radius:3px;background:linear-gradient(#1c4bb8,#1e52c0 50%,#2158c8);box-shadow:inset 1px 1px 1px #0e3590"></div>
<div class="a" style="left:228px;top:746px;width:14px;height:14px;border-radius:2px;background:#1c3c94;border:1px solid #2a50a8"></div>
<div class="t" style="left:230px;top:749px;font-size:8.5px;font-weight:bold;color:#e8f0ff">Ps</div>
<div class="t" style="left:247px;top:748px;font-size:11px;color:#fff;transform:scaleX(0.95);transform-origin:0 0">Adobe Photoshop CS3</div>
<div class="a" style="left:949px;top:738px;width:75px;height:30px;background:linear-gradient(#22a0f0 0,#1494ea 3px,#0f8de6 20px,#0c86e0 30px);border-left:1px solid #0a5ac0"></div>
<svg class="a" style="left:910px;top:742px" width="4" height="24"><g fill="#1a3a9a"><rect x="0" y="2" width="2" height="2"/><rect x="1" y="6" width="2" height="2"/><rect x="0" y="10" width="2" height="2"/><rect x="1" y="14" width="2" height="2"/><rect x="0" y="18" width="2" height="2"/></g></svg>
<div class="t" style="left:923px;top:750px;font-size:10.5px;color:#fff;transform:scaleX(0.9);transform-origin:0 0">EN</div>
<svg class="a" style="left:939px;top:743px" width="22" height="21"><circle cx="10.5" cy="10.5" r="9" fill="#3a8ee8" stroke="#9ad0ff" stroke-width="1.2"/><path d="M12.5 6L8 10.5L12.5 15" stroke="#fff" stroke-width="2.4" fill="none"/></svg>
<svg class="a" style="left:959px;top:745px" width="18" height="16"><path d="M3 3L6 6M15 3L12 6M1 8H5M13 8H17M3 13L6 10M15 13L12 10" stroke="#111" stroke-width="1.4"/><ellipse cx="9" cy="8.5" rx="4" ry="5" fill="#1a5a1a" stroke="#111"/></svg>
<div class="t" style="left:983px;top:749px;font-size:11px;color:#e0f4ff">17:32</div>

</body></html>
